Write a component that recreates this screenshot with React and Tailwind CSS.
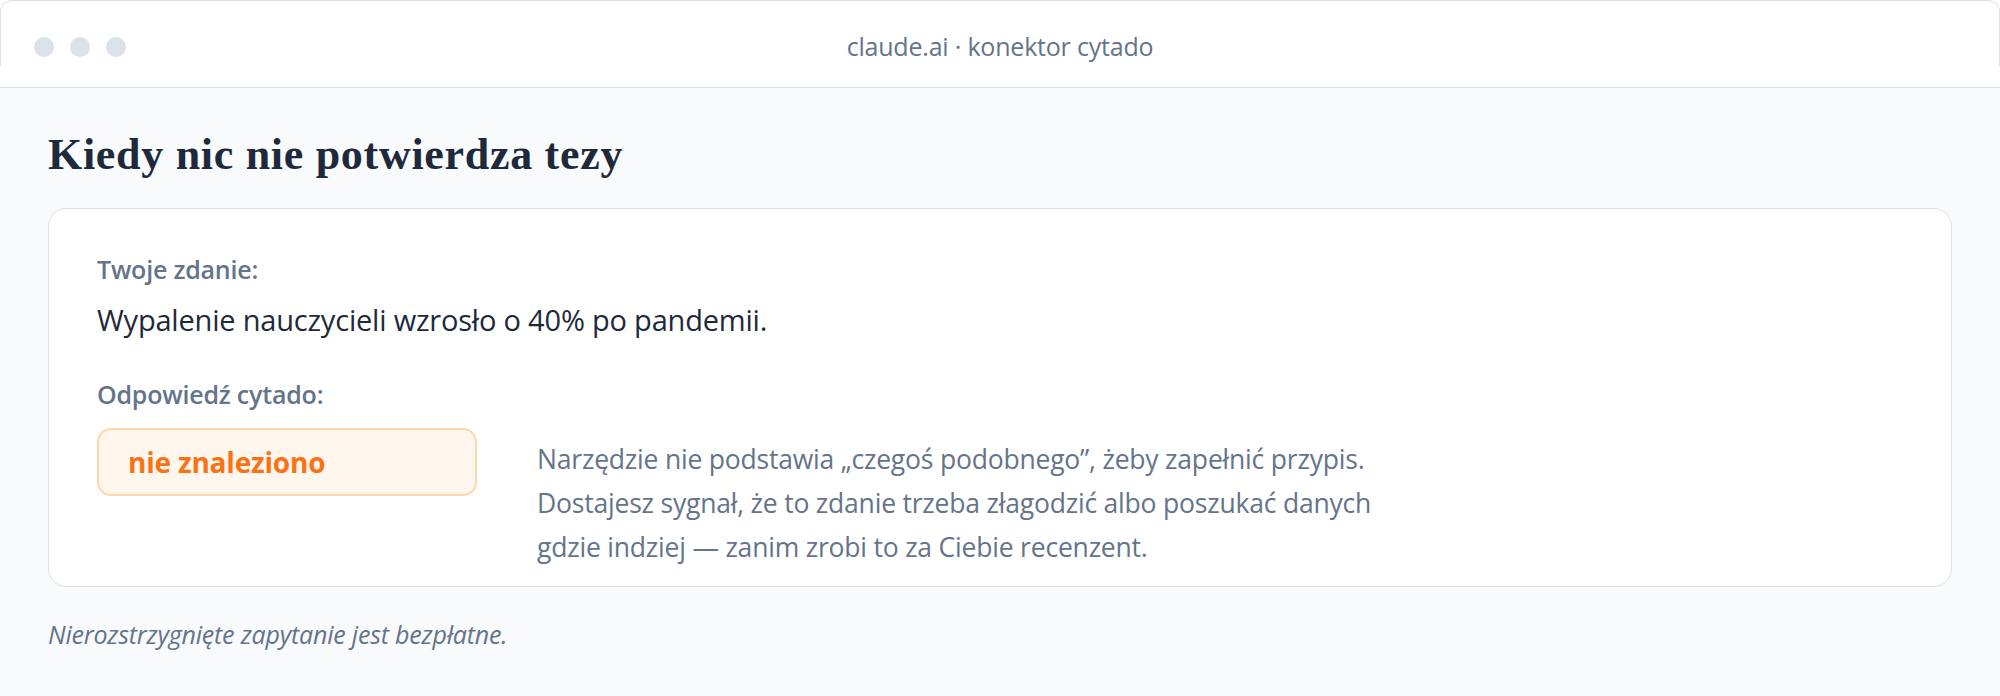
import React from 'react'

function WindowBar() {
  return (
    <div className="h-[88px] bg-white border-b border-[#dbe2ea]">
      <div className="h-[67px] rounded-t-xl border border-b-0 border-[#dbe2ea] pt-[33px]">
        <div className="grid grid-cols-[1fr_auto_1fr] items-center h-5">
          <div className="flex items-center gap-4 pl-[33px]">
            <span className="w-5 h-5 rounded-full bg-[#dbe2ea]" />
            <span className="w-5 h-5 rounded-full bg-[#dbe2ea]" />
            <span className="w-5 h-5 rounded-full bg-[#dbe2ea]" />
          </div>
          <div className="-mt-[2px] text-[25px] leading-7 text-[#64748b] tracking-[-0.2px]">
            claude.ai · konektor cytado
          </div>
          <div />
        </div>
      </div>
    </div>
  )
}

export default function App() {
  return (
    <div className="min-h-screen bg-[#f8fafc] font-['Open_Sans',sans-serif]">
      <WindowBar />
      <main className="px-12">
        <h1 className="pt-[43px] text-[44px] leading-[48px] tracking-[0.7px] font-bold text-[#1e293b] font-['Liberation_Serif',serif]">
          Kiedy nic nie potwierdza tezy
        </h1>

        <section className="mt-[29px] rounded-[18px] border border-[#dbe2ea] bg-white pl-12 pr-12 pt-[45px] pb-[17px]">
          <div className="text-[25px] leading-[30px] font-semibold text-[#64748b] tracking-[-0.2px]">Twoje zdanie:</div>
          <p className="mt-[20px] text-[29px] leading-[32px] text-[#1e293b] tracking-[-0.2px]">
            Wypalenie nauczycieli wzrosło o 40% po pandemii.
          </p>

          <div className="mt-[43px] text-[25px] leading-[30px] font-semibold text-[#64748b] tracking-[-0.2px]">Odpowiedź cytado:</div>
          <div className="mt-[19px] flex items-start gap-[60px]">
            <div className="w-[380px] h-[68px] shrink-0 flex items-center pl-[29px] rounded-[14px] border-2 border-[#fed7aa] bg-[#fff7ed]">
              <span className="text-[28px] font-bold text-[#f97316] tracking-[-0.2px]">nie znaleziono</span>
            </div>
            <p className="mt-[9px] max-w-[860px] text-[26.5px] leading-[44px] text-[#64748b] tracking-[-0.2px]">
              Narzędzie nie podstawia „czegoś podobnego”, żeby zapełnić przypis.
              Dostajesz sygnał, że to zdanie trzeba złagodzić albo poszukać danych
              gdzie indziej — zanim zrobi to za Ciebie recenzent.
            </p>
          </div>
        </section>

        <p className="mt-[33px] text-[25px] leading-[28px] italic text-[#64748b] tracking-[-0.2px]">
          Nierozstrzygnięte zapytanie jest bezpłatne.
        </p>
      </main>
    </div>
  )
}
